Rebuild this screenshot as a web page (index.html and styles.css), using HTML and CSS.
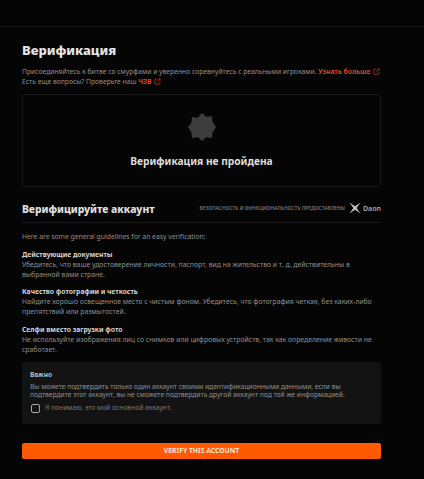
FILE: index.html
```html
<!DOCTYPE html>
<html lang="ru">
<head>
    <meta charset="UTF-8">
    <title>Верификация</title>
    <link rel="stylesheet" href="styles.css">
</head>
<body>
    <div class="topbar"></div>
    <div class="page">
        <h1 class="title">Верификация</h1>
        <p class="intro">Присоединяйтесь к битве со смурфами и уверенно соревнуйтесь с реальными игроками. <a class="link" href="#">Узнать больше <svg class="ext" viewBox="0 0 12 12"><path d="M5 2H1.500v8.500H10V7M7 1.500h3.500V5M10.500 1.500L5.500 6.500" fill="none" stroke="currentColor" stroke-width="1.100"/></svg></a><br>Есть еще вопросы? Проверьте наш <a class="link" href="#">ЧЗВ <svg class="ext" viewBox="0 0 12 12"><path d="M5 2H1.500v8.500H10V7M7 1.500h3.500V5M10.500 1.500L5.500 6.500" fill="none" stroke="currentColor" stroke-width="1.100"/></svg></a></p>

        <div class="status-box">
            <svg class="star" viewBox="0 0 32 32"><path d="M16 1l4.500 4.100 6.100-.7.700 6.100L31 16l-3.700 5.500-.7 6.100-6.100-.7L16 31l-4.500-4.100-6.100.7-.7-6.100L1 16l3.700-4.500.7-6.100 6.100.7z" fill="#3d3d3d"/></svg>
            <div class="status-text">Верификация не пройдена</div>
        </div>

        <div class="verify-head">
            <h2 class="verify-title">Верифицируйте аккаунт</h2>
            <div class="provider">
                <span class="provider-note">БЕЗОПАСНОСТЬ И ФУНКЦИОНАЛЬНОСТЬ ПРЕДОСТАВЛЕНЫ</span>
                <svg class="daon-mark" viewBox="0 0 12 12"><path d="M.5 .5L6 4.300 11.500 .5 7.600 6l3.900 5.500L6 7.800.5 11.500 4.400 6z" fill="#c4c4c4"/></svg>
                <span class="daon">Daon</span>
            </div>
        </div>

        <p class="lead">Here are some general guidelines for an easy verification:</p>

        <div class="guide">
            <h3>Действующие документы</h3>
            <p>Убедитесь, что ваше удостоверение личности, паспорт, вид на жительство и т. д. действительны в<br>выбранной вами стране.</p>
        </div>
        <div class="guide">
            <h3>Качество фотографии и четкость</h3>
            <p>Найдите хорошо освещенное место с чистым фоном. Убедитесь, что фотография четкая, без каких-либо препятствий или размытостей.</p>
        </div>
        <div class="guide">
            <h3>Селфи вместо загрузки фото</h3>
            <p>Не используйте изображения лиц со снимков или цифровых устройств, так как определение живости не сработает.</p>
        </div>

        <div class="notice">
            <h4>Важно</h4>
            <p>Вы можете подтвердить только один аккаунт своими идентификационными данными, если вы подтвердите этот аккаунт, вы не сможете подтвердить другой аккаунт под той же информацией.</p>
            <label class="check"><span class="box"></span>Я понимаю, это мой основной аккаунт.</label>
        </div>

        <button class="verify-btn">VERIFY THIS ACCOUNT</button>
    </div>
</body>
</html>
```

FILE: styles.css
```css
body {
    margin: 0;
    background: #050505;
    font-family: "Noto Sans", sans-serif;
    color: #8f8f8f;
    overflow: hidden;
}
h1, h2, h3, h4, p {
    margin: 0;
}
.topbar {
    height: 26px;
    background: #040404;
    border-bottom: 1px solid #141414;
}
.page {
    padding: 14px 43px 0 22px;
}
.title {
    font-size: 13px;
    line-height: 18px;
    font-weight: 800;
    color: #e6e6e6;
}
.intro {
    margin-top: 8px;
    font-size: 6.750px;
    line-height: 10px;
    white-space: nowrap;
}
.link {
    color: #d9431e;
    font-weight: 700;
    text-decoration: none;
}
.ext {
    width: 7px;
    height: 7px;
    margin-left: 1px;
    vertical-align: -1px;
}
.status-box {
    margin-top: 7px;
    height: 93px;
    box-sizing: border-box;
    border: 1px solid #181818;
    border-radius: 3px;
    display: flex;
    flex-direction: column;
    align-items: center;
    padding-top: 17px;
}
.star {
    width: 30px;
    height: 30px;
}
.status-text {
    margin-top: 12px;
    font-size: 10.200px;
    line-height: 14px;
    font-weight: 700;
    color: #dedede;
}
.verify-head {
    margin-top: 14px;
    height: 21px;
    border-bottom: 1px solid #1a1a1a;
    display: flex;
    justify-content: space-between;
    align-items: flex-start;
}
.verify-title {
    font-size: 10.300px;
    line-height: 16px;
    font-weight: 800;
    color: #e0e0e0;
}
.provider {
    display: flex;
    align-items: center;
    height: 14px;
}
.provider-note {
    font-size: 4.900px;
    font-weight: 600;
    color: #777;
    white-space: nowrap;
}
.daon-mark {
    width: 12px;
    height: 12px;
    margin: 0 2px 0 4px;
}
.daon {
    font-size: 7px;
    font-weight: 600;
    color: #aaa;
}
.lead {
    margin-top: 9px;
    font-size: 6.800px;
    line-height: 10px;
}
.guide {
    margin-top: 7.600px;
    font-size: 6.850px;
    line-height: 10px;
}
.guide h3 {
    font-size: 6.750px;
    line-height: 10px;
    font-weight: 700;
    color: #d4d4d4;
}
.notice {
    margin-top: 7px;
    height: 62px;
    box-sizing: border-box;
    padding: 8px 8px 0;
    background: #131313;
    border-radius: 3px;
    font-size: 6.700px;
    line-height: 8px;
}
.notice h4 {
    font-size: 6.500px;
    line-height: 9px;
    font-weight: 700;
    color: #bdbdbd;
}
.notice p {
    margin-top: 4px;
}
.check {
    margin-top: 5px;
    display: flex;
    align-items: center;
    color: #777;
}
.box {
    width: 7px;
    height: 7px;
    margin: 0 5px 0 1px;
    border: 1px solid #aaa;
    border-radius: 2px;
}
.verify-btn {
    display: block;
    width: 100%;
    height: 16px;
    margin-top: 19px;
    padding: 0;
    border: 0;
    border-radius: 2px;
    background: #ff5a00;
    color: #f4e6dc;
    font-family: "Noto Sans", sans-serif;
    font-size: 6.800px;
    font-weight: 700;
}
```
